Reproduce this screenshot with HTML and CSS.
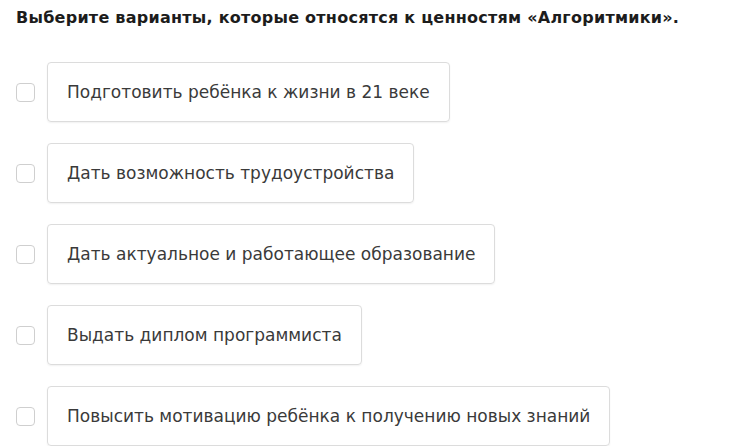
FILE: index.html
```html
<!DOCTYPE html>
<html lang="ru">
<head>
<meta charset="UTF-8">
<title>Ценности Алгоритмики</title>
<link rel="stylesheet" href="styles.css">
</head>
<body>
  <h1 class="question">Выберите варианты, которые относятся к ценностям «Алгоритмики».</h1>

  <div class="answers">
    <label class="answer">
      <span class="check"></span>
      <span class="answer-box">Подготовить ребёнка к жизни в 21 веке</span>
    </label>
    <label class="answer">
      <span class="check"></span>
      <span class="answer-box">Дать возможность трудоустройства</span>
    </label>
    <label class="answer">
      <span class="check"></span>
      <span class="answer-box">Дать актуальное и работающее образование</span>
    </label>
    <label class="answer">
      <span class="check"></span>
      <span class="answer-box">Выдать диплом программиста</span>
    </label>
    <label class="answer">
      <span class="check"></span>
      <span class="answer-box">Повысить мотивацию ребёнка к получению новых знаний</span>
    </label>
  </div>
</body>
</html>
```

FILE: styles.css
```css
body {
  margin: 0;
  padding: 8px 16px 0;
  background-color: #fff;
  font-family: "DejaVu Sans", "Liberation Sans", sans-serif;
  color: #333;
}
.question {
  margin: 0 0 34px;
  font-size: 16px;
  font-weight: bold;
  letter-spacing: 0.25px;
  line-height: 20px;
  color: #1c1c1c;
}
.answers {
  display: flex;
  flex-direction: column;
  gap: 21px;
}
.answer {
  display: flex;
  align-items: center;
  gap: 12px;
  cursor: pointer;
}
.check {
  flex: 0 0 auto;
  width: 17px;
  height: 17px;
  border: 1px solid #cfcfcf;
  border-radius: 4px;
  background-color: #fff;
}
.answer-box {
  display: block;
  padding: 0 19px;
  height: 58px;
  line-height: 58px;
  border: 1px solid #dcdcdc;
  border-radius: 4px;
  box-shadow: 0 1px 2px rgba(0, 0, 0, 0.06);
  font-size: 17px;
  color: #3a3a3a;
}
```
